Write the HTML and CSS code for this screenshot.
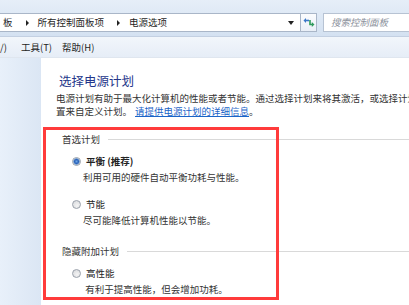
FILE: index.html
```html
<!DOCTYPE html>
<html lang="zh-CN">
<head>
    <meta charset="UTF-8">
    <meta name="viewport" content="width=device-width, initial-scale=1.0">
    <title>电源选项</title>
    <link rel="stylesheet" href="styles.css">
</head>
<body>
    <div class="window">
        <div class="addressbar">
            <div class="crumbs">
                <span class="crumb">板</span>
                <span class="sep"></span>
                <span class="crumb">所有控制面板项</span>
                <span class="sep"></span>
                <span class="crumb">电源选项</span>
                <span class="drop"></span>
            </div>
            <div class="refresh">
                <svg width="12" height="11" viewBox="0 0 12 11">
                    <path d="M6 3.5 H2" stroke="#3b78c8" stroke-width="1.6" fill="none"/>
                    <path d="M0.5 3.5 L3 1 L3 6 Z" fill="#3b78c8"/>
                    <path d="M7 3 V7.5 H9" stroke="#2f9a5c" stroke-width="1.6" fill="none"/>
                    <path d="M11.5 7.5 L8.8 5 L8.8 10 Z" fill="#2f9a5c"/>
                </svg>
            </div>
            <div class="search">搜索控制面板</div>
        </div>

        <div class="menubar">
            <span class="menu cut">/)</span>
            <span class="menu">工具(T)</span>
            <span class="menu">帮助(H)</span>
        </div>

        <div class="main">
            <div class="navpane"></div>
            <div class="content">
                <h1 class="title">选择电源计划</h1>
                <p class="intro">电源计划有助于最大化计算机的性能或者节能。通过选择计划来将其激活，或选择计划并通过更改其电源设<br>置来自定义计划。<a href="#">请提供电源计划的详细信息</a>。</p>

                <div class="group">
                    <div class="group-head"><span>首选计划</span><i class="rule"></i></div>
                    <div class="plan">
                        <div class="plan-row"><span class="radio checked"></span><b>平衡 (推荐)</b></div>
                        <div class="plan-desc">利用可用的硬件自动平衡功耗与性能。</div>
                    </div>
                    <div class="plan">
                        <div class="plan-row"><span class="radio"></span>节能</div>
                        <div class="plan-desc">尽可能降低计算机性能以节能。</div>
                    </div>
                </div>

                <div class="group">
                    <div class="group-head"><span>隐藏附加计划</span><i class="rule"></i></div>
                    <div class="plan">
                        <div class="plan-row"><span class="radio"></span>高性能</div>
                        <div class="plan-desc">&nbsp;有利于提高性能，但会增加功耗。</div>
                    </div>
                </div>
            </div>
        </div>

        <div class="highlight"></div>
    </div>
</body>
</html>
```

FILE: styles.css
```css
* {
    box-sizing: border-box;
}

body {
    margin: 0;
    padding: 0;
    font-family: "Noto Sans CJK SC", "Noto Sans", sans-serif;
    font-size: 9.5px;
    color: #333;
    background: #fff;
}

.window {
    position: relative;
    width: 409px;
    height: 305px;
    overflow: hidden;
}

/* address bar */
.addressbar {
    display: flex;
    align-items: flex-start;
    height: 37px;
    padding-top: 13px;
    background: linear-gradient(#e6eef8, #d4e1f1);
    border-bottom: 1px solid #c3d0e2;
}

.crumbs {
    display: flex;
    align-items: center;
    flex-shrink: 0;
    width: 303px;
    height: 19px;
    margin-left: -2px;
    padding-left: 4px;
    background: #fff;
    border: 1px solid #a9b6c8;
    color: #1f1f1f;
    line-height: 17px;
}

.sep {
    width: 0;
    height: 0;
    margin: 0 9px 0 13px;
    border-top: 3px solid transparent;
    border-bottom: 3px solid transparent;
    border-left: 3px solid #222;
}

.drop {
    width: 0;
    height: 0;
    margin-left: auto;
    margin-right: 6px;
    border-left: 3px solid transparent;
    border-right: 3px solid transparent;
    border-top: 4px solid #222;
}

.refresh {
    display: flex;
    align-items: center;
    justify-content: center;
    flex-shrink: 0;
    width: 17px;
    height: 19px;
    margin-left: -1px;
    background: linear-gradient(#fbfcfe, #e9eff7);
    border: 1px solid #a9b6c8;
}

.search {
    flex: 1;
    height: 19px;
    margin-left: 6px;
    margin-right: -4px;
    padding-left: 7px;
    background: #fff;
    border: 1px solid #b7c3d3;
    color: #8c929c;
    font-style: italic;
    line-height: 17px;
    white-space: nowrap;
}

/* menu bar */
.menubar {
    display: flex;
    height: 21px;
    background: linear-gradient(#f2f6fb, #e6edf7);
    border-bottom: 1px solid #dfe6ef;
    line-height: 20px;
    color: #1e1e1e;
}

.menu {
    margin-right: 10px;
}

.menu.cut {
    margin-right: 14px;
}

/* body */
.main {
    display: flex;
    height: 247px;
}

.navpane {
    flex-shrink: 0;
    width: 41px;
    background: linear-gradient(90deg, #e8f0fa, #dbe6f4);
}

.content {
    flex: 1;
    min-width: 0;
    overflow: hidden;
    padding: 15px 0 0 15px;
    white-space: nowrap;
}

.title {
    margin: 0 0 3px 3px;
    font-size: 12.5px;
    font-weight: normal;
    line-height: 16px;
    color: #24368a;
}

.intro {
    margin: 0;
    line-height: 13px;
    color: #333;
}

.intro a {
    margin-left: 3px;
    color: #1a64c8;
    text-decoration: underline;
}

.group {
    margin-top: 14px;
}

.group + .group {
    margin-top: 17px;
}

.group-head {
    display: flex;
    align-items: center;
    padding-left: 6px;
    line-height: 14px;
    color: #333;
}

.rule {
    flex: 1;
    height: 1px;
    margin-left: 8px;
    background: #d9d9d9;
}

.plan {
    margin-top: 8px;
    padding-left: 16px;
}

.plan + .plan {
    margin-top: 13px;
}

.plan-row {
    display: flex;
    align-items: center;
    line-height: 14px;
    color: #222;
}

.plan-row b {
    font-weight: bold;
}

.radio {
    flex-shrink: 0;
    width: 9px;
    height: 9px;
    margin-right: 5px;
    border-radius: 50%;
    border: 1px solid #9aa1ab;
    background: radial-gradient(circle at 60% 65%, #f4f4f4, #d4d6da);
}

.radio.checked {
    background: radial-gradient(circle, #6aa6e6 0, #2c62b8 2px, #7fa8d8 3px, #e7ecf2 3.5px);
}

.plan-desc {
    margin-top: 2px;
    padding-left: 11px;
    line-height: 14px;
    color: #333;
}

/* red annotation frame */
.highlight {
    position: absolute;
    left: 43px;
    top: 127px;
    width: 236px;
    height: 173px;
    border: 3px solid #ff3b3b;
}
```
